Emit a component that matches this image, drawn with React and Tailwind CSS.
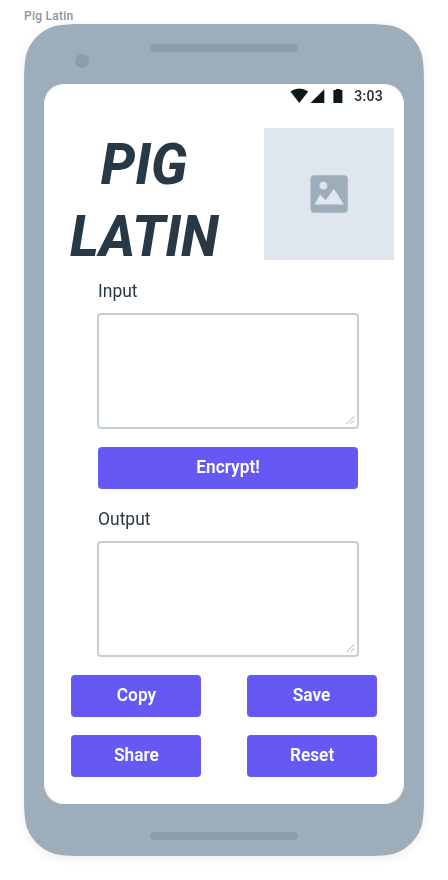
function StatusBar() {
  return (
    <div className="flex h-6 items-center justify-end pr-[21px]">
      <svg width="54" height="24" viewBox="0 0 54 24" fill="#0d171e">
        <path d="M0.4 7.4Q9.3 1.8 18.2 7.4L9.3 19Z" />
        <path d="M34.3 5.3V19H20.5Z" />
        <path d="M43.4 6H46V5H50V6H52.4V19H43.4Z" />
      </svg>
      <span className="ml-[10px] text-sm leading-6 font-medium tracking-[0.3px] text-[#1f2b34]">3:03</span>
    </div>
  );
}

function Label({ children }) {
  return (
    <label className="block h-6 text-lg leading-6 text-[#293845]">
      <span className="inline-block origin-left scale-x-[0.97]">{children}</span>
    </label>
  );
}

function TextBox() {
  return (
    <div className="-mx-px flex h-[116px] items-end justify-end rounded border-2 border-[#c3cfd9] bg-white">
      <svg className="mr-0.5 mb-0.5" width="9" height="9" viewBox="0 0 9 9" fill="none" stroke="#c3cfd9" strokeWidth="1.2">
        <path d="M0.5 8.2L8.2 0.5M4.5 8.2L8.2 4.5" />
      </svg>
    </div>
  );
}

function Button({ children }) {
  return (
    <button className="flex h-[42px] w-full items-center justify-center rounded bg-[#6558f5] pb-0.5 text-lg leading-6 font-semibold text-white">
      <span className="inline-block scale-x-[0.96]">{children}</span>
    </button>
  );
}

export default function App() {
  return (
    <div className="h-[880px] w-[448px] overflow-hidden bg-white px-6 font-['Roboto','Liberation_Sans',sans-serif]">
      <div className="h-6 pt-2 text-xs leading-4 font-medium tracking-[0.25px] text-[#8595a3]">Pig Latin</div>
      <div className="drop-shadow-[0_2px_5px_rgba(0,0,0,0.08)]">
        <div className="flex h-[832px] w-[400px] flex-col items-center bg-[#9eadba] [clip-path:path('M0_60C0_50_.3_42_1.3_35C3.8_18.3_18.3_3.8_35_1.3C42_.3_50_0_60_0H340C350_0_358_.3_365_1.3C381.7_3.8_396.2_18.3_398.7_35C399.7_42_400_50_400_60V772C400_782_399.7_790_398.7_797C396.2_813.7_381.7_828.2_365_830.7C358_831.7_350_832_340_832H60C50_832_42_831.7_35_830.7C18.3_828.2_3.8_813.7_1.3_797C.3_790_0_782_0_772Z')]">
          <div className="flex h-[60px] w-full pt-5">
            <div className="mt-[10px] ml-[51px] h-[14px] w-[14px] rounded-full bg-[#8d9dac]" />
            <div className="ml-[61px] h-2 w-[148px] rounded-full bg-[#8d9dac]" />
          </div>
          <main className="h-[720px] w-[360px] rounded-[20px] bg-white">
            <StatusBar />
            <div className="mt-5 flex h-[132px] justify-between pr-[10px] pl-[20px]">
              <h1 className="flex w-40 flex-col items-center pt-px text-[57px] leading-[72px] font-extrabold text-[#293845] italic">
                <span className="scale-x-[0.96]">PIG</span>
                <span className="scale-x-[0.96]">LATIN</span>
              </h1>
              <div className="flex h-[132px] w-[130px] items-center justify-center bg-[#dfe6ed] pr-px pb-px">
                <svg width="38" height="38" viewBox="0 0 38 38">
                  <rect x="0.5" y="0.3" width="37.3" height="37.4" rx="4" fill="#9eadba" />
                  <circle cx="13.4" cy="10.6" r="3.9" fill="#dfe6ed" />
                  <path d="M4.3 29.5L10.2 19.5L15.7 25.3L23.9 13.8L34 29.5Z" fill="#dfe6ed" />
                </svg>
              </div>
            </div>
            <div className="pr-[46px] pl-[54px]">
              <div className="mt-[19px]"><Label>Input</Label></div>
              <div className="mt-[10px]"><TextBox /></div>
              <div className="mt-[18px]"><Button>Encrypt!</Button></div>
              <div className="mt-[18px]"><Label>Output</Label></div>
              <div className="mt-[10px]"><TextBox /></div>
            </div>
            <div className="mt-[18px] grid grid-cols-2 gap-x-[46px] gap-y-[18px] px-[27px]">
              <Button>Copy</Button>
              <Button>Save</Button>
              <Button>Share</Button>
              <Button>Reset</Button>
            </div>
          </main>
          <div className="mt-7 h-2 w-[148px] rounded-full bg-[#8d9dac]" />
        </div>
      </div>
    </div>
  );
}
